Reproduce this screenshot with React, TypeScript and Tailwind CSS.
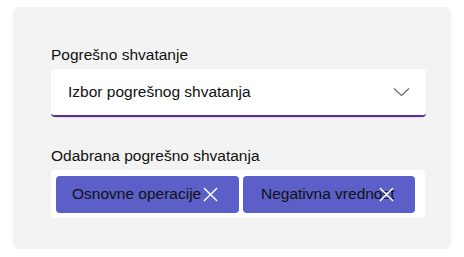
import React from 'react';

/**
 * Chip for a selected misconception
 */
function Chip({ label, width, pl }: { label: string; width: string; pl: string }) {
  return (
    <div
      className={`relative flex h-[37px] items-center rounded-[4px] bg-[#5b5fc7] text-[15.5px] text-[#111] ${width} ${pl}`}
    >
      <span className="whitespace-nowrap">{label}</span>
      <svg
        className="absolute right-[21px] top-[11px] h-[15px] w-[15px]"
        viewBox="0 0 16 16"
        fill="none"
        stroke="white"
        strokeWidth="1.6"
        strokeLinecap="round"
      >
        <path d="M1.5 1.5l13 13M14.5 1.5l-13 13" />
      </svg>
    </div>
  );
}

export default function App() {
  return (
    <div className="min-h-[257px] bg-white px-[13px] pt-[7px] font-['Liberation_Sans',sans-serif]">
      <div className="h-[242px] rounded-[6px] bg-[#f3f3f3] pl-[38px] pr-[25px] pt-[38px]">
        {/* Misconception picker */}
        <label className="block text-[15.5px] leading-[20px] text-[#111]">Pogrešno shvatanje</label>
        <div className="mt-[4px] flex h-[48px] items-center justify-between rounded-[4px] border-b-2 border-[#5c2e91] bg-white pl-[17px] pr-[16px] shadow-[0_1px_1px_rgba(0,0,0,0.08)]">
          <span className="text-[15.5px] text-[#111]">Izbor pogrešnog shvatanja</span>
          <svg className="h-[10px] w-[17px]" viewBox="0 0 17 10" fill="none" stroke="#666" strokeWidth="1.1">
            <path d="M1 1.5l7.5 7 7.5-7" />
          </svg>
        </div>

        {/* Selected misconceptions */}
        <label className="mt-[29px] block text-[15.5px] leading-[20px] text-[#111]">
          Odabrana pogrešno shvatanja
        </label>
        <div className="mt-[4px] flex h-[48px] w-[374px] items-center gap-[4px] rounded-[4px] bg-white px-[5px]">
          <Chip label="Osnovne operacije" width="w-[183px]" pl="pl-[16px]" />
          <Chip label="Negativna vrednost" width="w-[172px]" pl="pl-[18px]" />
        </div>
      </div>
    </div>
  );
}
